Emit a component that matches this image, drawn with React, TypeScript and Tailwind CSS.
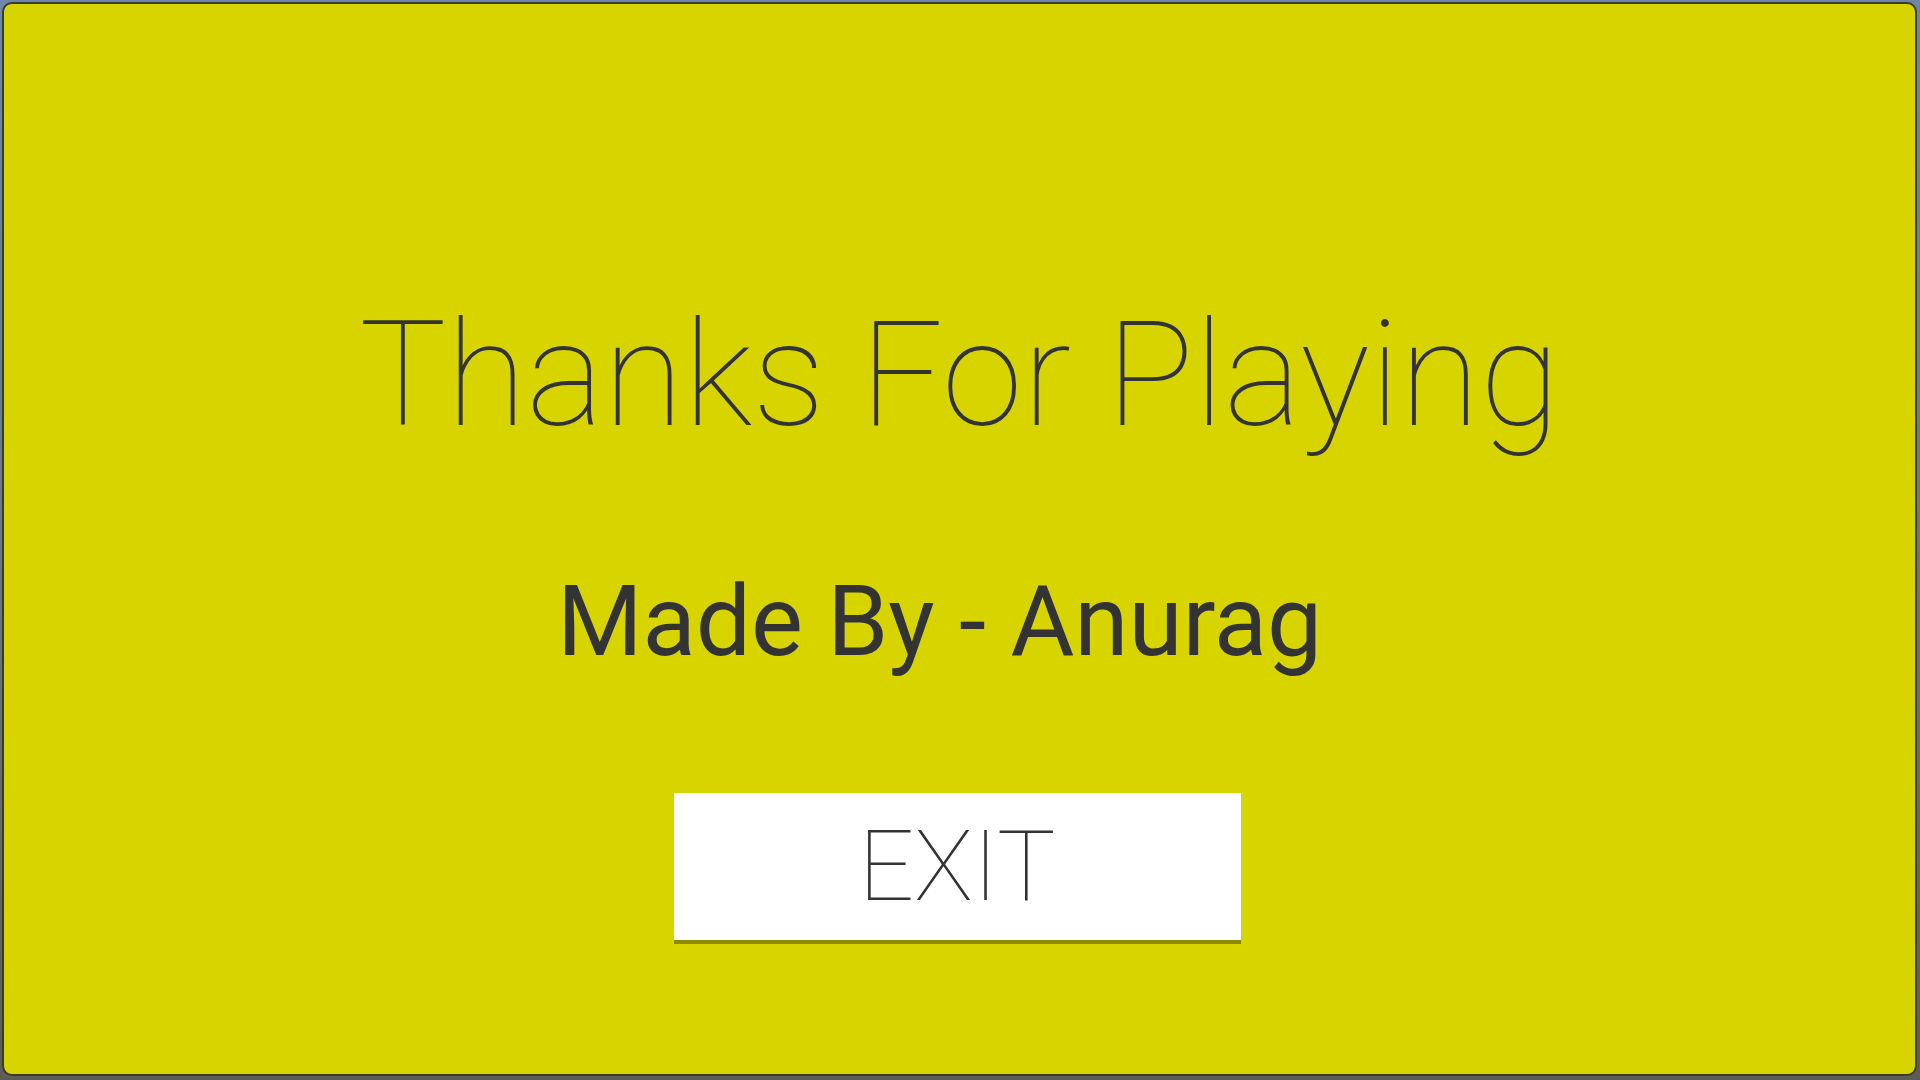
export default function App() {
  return (
    <div className="h-[1080px] w-[1920px] overflow-hidden bg-gradient-to-b from-[#6e86a8] via-[#6a7788] to-[#5e5c58] p-[2px] pb-[4px] pr-[3px]">
      <div
        className="flex h-full w-full flex-col items-center rounded-[10px] border-2 border-[#3b3a22] bg-[#d8d400] pt-[299px] text-[#333333]"
        style={{ fontFamily: "Roboto, 'Liberation Sans', sans-serif" }}
      >
        <h1 className="text-[146px] font-thin leading-none">Thanks For Playing</h1>

        <p className="mr-[40px] mt-[124px] text-[98px] font-normal leading-none">Made By - Anurag</p>

        <button
          type="button"
          className="mr-[5px] mt-[122px] h-[151px] w-[567px] border-b-4 border-[#8f8b00] bg-white text-[98px] font-thin leading-none text-[#333333]"
        >
          EXIT
        </button>
      </div>
    </div>
  );
}
